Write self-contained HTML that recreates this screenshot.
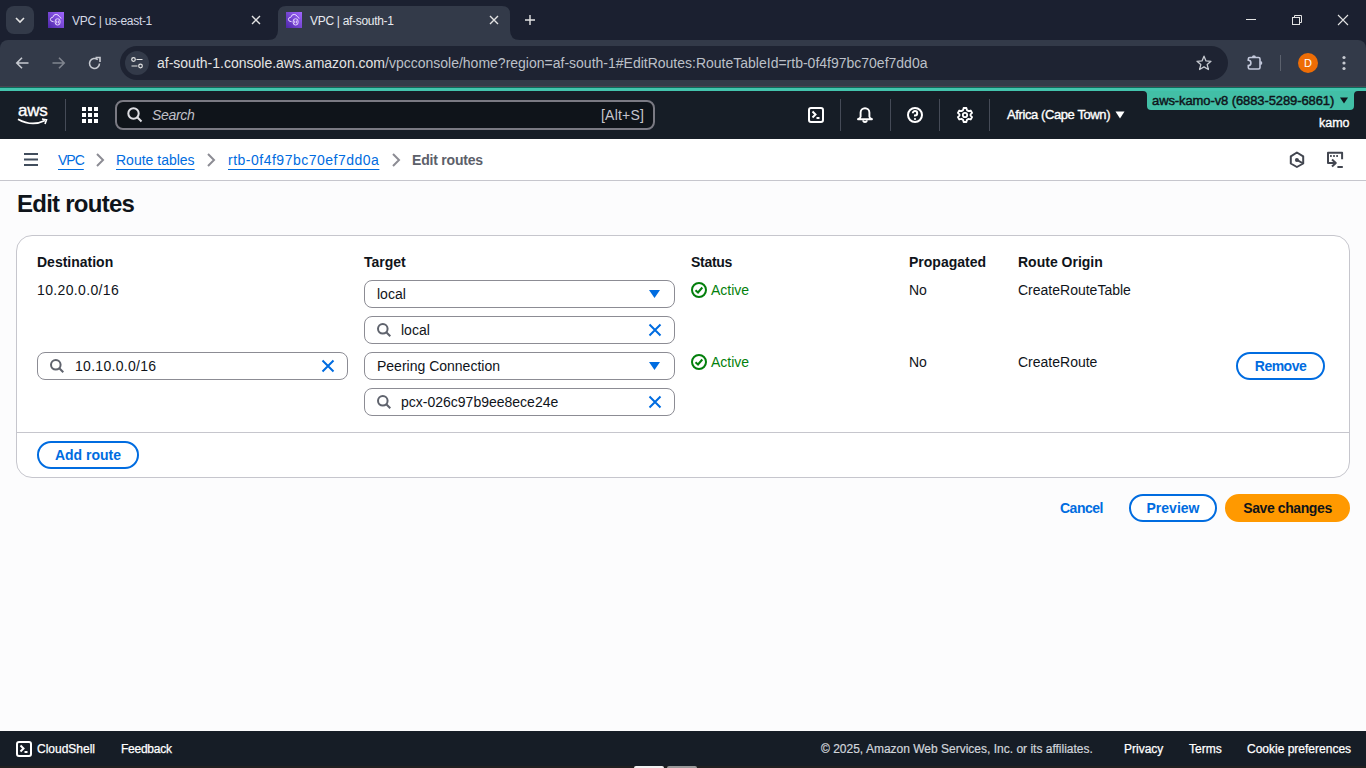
<!DOCTYPE html>
<html><head><meta charset="utf-8">
<style>
*{box-sizing:border-box;margin:0;padding:0}
html,body{width:1366px;height:768px;overflow:hidden;background:#fcfcfd;font-family:"Liberation Sans",sans-serif}
.a{position:absolute;white-space:nowrap}
svg{position:absolute;overflow:visible}
/* chrome */
#tabs{left:0;top:0;width:1366px;height:48px;background:#1b2030}
#toolbar{left:0;top:40px;width:1366px;height:47px;background:#333a49;border-radius:8px 8px 0 0}
#omni{left:120px;top:46px;width:1108px;height:34px;background:#1e2332;border-radius:17px}
/* aws header */
#teal{left:0;top:88px;width:1366px;height:3px;background:#43c4ad}
#hdr{left:0;top:91px;width:1366px;height:48px;background:#161d26}
#crumb{left:0;top:139px;width:1366px;height:42px;background:#fff;border-bottom:1px solid #c6c6cd}
.link{color:#006ce0;text-decoration:underline;text-underline-offset:4px;text-decoration-thickness:1px}
.t14{font-size:14px;line-height:20px}
.b{font-weight:700}
.card{left:16px;top:235px;width:1334px;height:243px;background:#fff;border:1px solid #c6c6cd;border-radius:16px}
.inp{position:absolute;height:28px;width:311px;border:1px solid #8c8c94;border-radius:8px;background:#fff}
.btn{position:absolute;height:28px;border:2px solid #006ce0;border-radius:20px;background:#fff;color:#006ce0;font-weight:700;font-size:14px;line-height:20px;text-align:center}
#footer{left:0;top:731px;width:1366px;height:35px;background:#161d26}
</style></head><body>

<!-- ============ CHROME TAB STRIP ============ -->
<div class="a" id="tabs"></div>
<div class="a" style="left:6px;top:6px;width:28px;height:28px;border-radius:8px;background:#333a49"></div>
<svg style="left:15px;top:17px" width="10" height="6"><path d="M1 1 L5 5 L9 1" stroke="#e3e3e3" stroke-width="1.6" fill="none"/></svg>
<!-- tab1 -->
<svg style="left:48px;top:12px" width="16" height="16"><defs><linearGradient id="fg" x1="0" y1="1" x2="1" y2="0"><stop offset="0" stop-color="#4d27a8"/><stop offset="1" stop-color="#a166ff"/></linearGradient></defs><rect width="16" height="16" fill="url(#fg)"/><path d="M5.6 9.7Q2.3 9.6 2.4 7.3Q2.7 5.2 4.8 5.3Q5.5 2.3 8.2 2.4Q10.5 2.6 11.2 4.5Q12.9 5 13.1 6.6" stroke="#e8dcff" stroke-width="1" fill="none"/><rect x="7.2" y="6.8" width="4.8" height="6.2" rx="2.2" stroke="#e8dcff" stroke-width="1" fill="#7d45d8"/><path d="M8.7 8.6V11.3M10.4 8.6V11.3" stroke="#e8dcff" stroke-width="0.9"/></svg>
<div class="a" style="left:72px;top:14px;font-size:12px;line-height:15px;color:#d5d9e6;letter-spacing:-0.3px">VPC | us-east-1</div>
<svg style="left:252px;top:16px" width="8" height="8"><path d="M0 0L8 8M8 0L0 8" stroke="#e3e3e3" stroke-width="1.4"/></svg>
<!-- active tab -->
<svg style="left:268px;top:6px" width="252" height="34"><path d="M0 34 Q10 34 10 24 L10 8 Q10 0 18 0 L234 0 Q242 0 242 8 L242 24 Q242 34 252 34 Z" fill="#333a49"/></svg>
<svg style="left:286px;top:12px" width="16" height="16"><rect width="16" height="16" fill="url(#fg)"/><path d="M5.6 9.7Q2.3 9.6 2.4 7.3Q2.7 5.2 4.8 5.3Q5.5 2.3 8.2 2.4Q10.5 2.6 11.2 4.5Q12.9 5 13.1 6.6" stroke="#e8dcff" stroke-width="1" fill="none"/><rect x="7.2" y="6.8" width="4.8" height="6.2" rx="2.2" stroke="#e8dcff" stroke-width="1" fill="#7d45d8"/><path d="M8.7 8.6V11.3M10.4 8.6V11.3" stroke="#e8dcff" stroke-width="0.9"/></svg>
<div class="a" style="left:310px;top:14px;font-size:12px;line-height:15px;color:#e8eaf0;letter-spacing:-0.3px">VPC | af-south-1</div>
<svg style="left:490px;top:16px" width="8" height="8"><path d="M0 0L8 8M8 0L0 8" stroke="#e3e3e3" stroke-width="1.4"/></svg>
<svg style="left:525px;top:15px" width="10" height="10"><path d="M5 0V10M0 5H10" stroke="#e3e3e3" stroke-width="1.4"/></svg>
<!-- window controls -->
<svg style="left:1246px;top:19px" width="10" height="1"><path d="M0 0.5H10" stroke="#e3e3e3" stroke-width="1"/></svg>
<svg style="left:1292px;top:15px" width="10" height="10"><path d="M2.5 2.5V0.5H9.5V7.5H7.5" stroke="#e3e3e3" stroke-width="1" fill="none"/><rect x="0.5" y="2.5" width="7" height="7" stroke="#e3e3e3" stroke-width="1" fill="none"/></svg>
<svg style="left:1338px;top:15px" width="10" height="10"><path d="M0 0L10 10M10 0L0 10" stroke="#e3e3e3" stroke-width="1.1"/></svg>

<!-- ============ TOOLBAR ============ -->
<div class="a" id="toolbar"></div>
<svg style="left:16px;top:57px" width="13" height="12"><path d="M6 0.8L0.8 6L6 11.2M0.8 6H12.5" stroke="#c7cad1" stroke-width="1.6" fill="none"/></svg>
<svg style="left:52px;top:57px" width="13" height="12"><path d="M7 0.8L12.2 6L7 11.2M12.2 6H0.5" stroke="#80858f" stroke-width="1.6" fill="none"/></svg>
<svg style="left:88px;top:57px" width="13" height="13"><path d="M11.5 6.5A5 5 0 1 1 9.8 2.7" stroke="#c7cad1" stroke-width="1.6" fill="none"/><path d="M7.5 0.5H12V5" stroke="#c7cad1" stroke-width="1.6" fill="none"/></svg>
<div class="a" id="omni"></div>
<div class="a" style="left:125px;top:51px;width:24px;height:24px;border-radius:12px;background:#333a49"></div>
<svg style="left:131px;top:57px" width="12" height="12"><circle cx="2.5" cy="2.5" r="1.8" stroke="#e3e3e3" stroke-width="1.2" fill="none"/><path d="M5.5 2.5H11.5M0.5 9H6.5" stroke="#e3e3e3" stroke-width="1.2"/><circle cx="9.5" cy="9" r="1.8" stroke="#e3e3e3" stroke-width="1.2" fill="none"/></svg>
<div class="a t14" style="left:157px;top:53px;color:#e3e3e3">af-south-1.console.aws.amazon.com<span style="color:#bcc0c8">/vpcconsole/home?region=af-south-1#EditRoutes:RouteTableId=rtb-0f4f97bc70ef7dd0a</span></div>
<svg style="left:1196px;top:55px" width="16" height="16"><path d="M8 1.2L10 5.9L15 6.3L11.2 9.6L12.4 14.5L8 11.9L3.6 14.5L4.8 9.6L1 6.3L6 5.9Z" stroke="#c7cad1" stroke-width="1.3" fill="none" stroke-linejoin="round"/></svg>
<svg style="left:1240px;top:50px" width="30" height="26"><path d="M9.8 7.5H18.5Q20 7.5 20 9V17.5Q20 19 18.5 19H9.8Q8.3 19 8.3 17.5V15.5A2.6 2.6 0 0 0 8.3 10.3V9Q8.3 7.5 9.8 7.5Z" stroke="#c4c9dc" stroke-width="1.6" fill="none"/><path d="M11.9 7.2A2 2 0 0 1 15.9 7.2Z" fill="#c4c9dc"/><path d="M20.3 10.9A2 2 0 0 1 20.3 14.9Z" fill="#c4c9dc"/></svg>
<div class="a" style="left:1280px;top:55px;width:1px;height:16px;background:#5b616d"></div>
<div class="a" style="left:1298px;top:53px;width:20px;height:20px;border-radius:10px;background:#ee6d05;color:#fff;font-size:11px;line-height:20px;text-align:center">D</div>
<svg style="left:1342px;top:55px" width="4" height="16"><circle cx="2" cy="2.5" r="1.6" fill="#c7cad1"/><circle cx="2" cy="8" r="1.6" fill="#c7cad1"/><circle cx="2" cy="13.5" r="1.6" fill="#c7cad1"/></svg>

<!-- ============ AWS HEADER ============ -->
<div class="a" id="teal"></div>
<div class="a" style="left:0;top:86px;width:1366px;height:1px;background:#4b4452"></div>
<div class="a" style="left:0;top:87px;width:1366px;height:1px;background:#0d6a5c"></div>
<div class="a" style="left:0;top:91px;width:1366px;height:1px;background:#14161f"></div>
<div class="a" id="hdr"></div>
<div class="a" style="left:18px;top:102px;font-size:17px;line-height:17px;color:#fff;letter-spacing:-0.2px;-webkit-text-stroke:0.35px #fff">aws</div>
<svg style="left:17px;top:118px" width="32" height="8"><path d="M1 1.2Q15 9 28 2.5" stroke="#fff" stroke-width="1.8" fill="none"/><path d="M25 1L29.5 1.8L28 6" stroke="#fff" stroke-width="1.6" fill="none"/></svg>
<div class="a" style="left:65px;top:99px;width:1px;height:32px;background:#454b57"></div>
<svg style="left:82px;top:107px" width="16" height="16"><g fill="#fff"><rect x="0" y="0" width="4" height="4"/><rect x="6" y="0" width="4" height="4"/><rect x="12" y="0" width="4" height="4"/><rect x="0" y="6" width="4" height="4"/><rect x="6" y="6" width="4" height="4"/><rect x="12" y="6" width="4" height="4"/><rect x="0" y="12" width="4" height="4"/><rect x="6" y="12" width="4" height="4"/><rect x="12" y="12" width="4" height="4"/></g></svg>
<div class="a" style="left:115px;top:100px;width:540px;height:30px;border:2px solid #7a7a83;border-radius:8px;background:#0f141a"></div>
<svg style="left:127px;top:107px" width="16" height="16"><circle cx="6.5" cy="6.5" r="5.2" stroke="#dedee3" stroke-width="2" fill="none"/><path d="M10.3 10.3L14.5 14.5" stroke="#dedee3" stroke-width="2"/></svg>
<div class="a t14" style="left:152px;top:105px;color:#c0c0c8;font-style:italic;letter-spacing:-0.3px">Search</div>
<div class="a t14" style="left:601px;top:105px;color:#c6c6cd;letter-spacing:0.2px">[Alt+S]</div>
<!-- header icons -->
<svg style="left:808px;top:107px" width="16" height="16"><rect x="1" y="1" width="14" height="14" rx="2" stroke="#fff" stroke-width="2" fill="none"/><path d="M4.5 4.5L7.5 7.5L4.5 10.5" stroke="#fff" stroke-width="2" fill="none"/><path d="M8.5 11H11.5" stroke="#fff" stroke-width="2"/></svg>
<div class="a" style="left:840px;top:99px;width:1px;height:32px;background:#454b57"></div>
<svg style="left:857px;top:107px" width="16" height="16"><path d="M3.6 9.8V5.6A4.4 4.4 0 0 1 12.4 5.6V9.8Q12.4 11 15 12.2H1Q3.6 11 3.6 9.8Z" stroke="#fff" stroke-width="1.9" fill="none" stroke-linejoin="round"/><path d="M6.2 13.2A1.8 1.8 0 0 0 9.8 13.2" stroke="#fff" stroke-width="1.8" fill="none"/></svg>
<div class="a" style="left:890px;top:99px;width:1px;height:32px;background:#454b57"></div>
<svg style="left:907px;top:107px" width="16" height="16"><circle cx="8" cy="8" r="7" stroke="#fff" stroke-width="2" fill="none"/><path d="M5.8 6.2A2.2 2.2 0 1 1 8 8.4V9.6" stroke="#fff" stroke-width="2" fill="none"/><circle cx="8" cy="12" r="1.1" fill="#fff"/></svg>
<div class="a" style="left:939px;top:99px;width:1px;height:32px;background:#454b57"></div>
<svg style="left:957px;top:107px" width="16" height="16"><path d="M6.6 1H9.4L9.9 3.1L11.6 4.1L13.7 3.5L15.1 5.9L13.5 7.4V8.6L15.1 10.1L13.7 12.5L11.6 11.9L9.9 12.9L9.4 15H6.6L6.1 12.9L4.4 11.9L2.3 12.5L0.9 10.1L2.5 8.6V7.4L0.9 5.9L2.3 3.5L4.4 4.1L6.1 3.1Z" stroke="#fff" stroke-width="1.8" fill="none" stroke-linejoin="round"/><circle cx="8" cy="8" r="2.2" stroke="#fff" stroke-width="1.8" fill="none"/></svg>
<div class="a" style="left:989px;top:99px;width:1px;height:32px;background:#454b57"></div>
<div class="a" style="left:1007px;top:105px;font-size:13px;line-height:20px;color:#fff;letter-spacing:-0.4px;-webkit-text-stroke:0.35px #fff">Africa (Cape Town)</div>
<svg style="left:1115px;top:111px" width="10" height="8"><path d="M0.5 0.5H9.5L5 7.5Z" fill="#fff"/></svg>
<!-- account badge -->
<svg style="left:1143px;top:91px" width="215" height="19"><path d="M0 0H215Q211 0 211 4V15Q211 19 207 19H8Q4 19 4 15V4Q4 0 0 0Z" fill="#42bfa6"/></svg>
<div class="a" style="left:1152px;top:91px;font-size:13px;line-height:19px;color:#0f141a;letter-spacing:-0.1px;-webkit-text-stroke:0.45px #0f141a">aws-kamo-v8 (6883-5289-6861)</div>
<svg style="left:1340px;top:97px" width="8" height="7"><path d="M0 0.5H8L4 6.5Z" fill="#0f141a"/></svg>
<div class="a" style="left:1319px;top:114px;font-size:12.5px;line-height:18px;color:#fff;-webkit-text-stroke:0.35px #fff">kamo</div>

<!-- ============ BREADCRUMB BAR ============ -->
<div class="a" id="crumb"></div>
<svg style="left:24px;top:153px" width="14" height="13"><path d="M0 1H14M0 6.5H14M0 12H14" stroke="#414d5c" stroke-width="2"/></svg>
<div class="a t14 link" style="left:58px;top:150px;letter-spacing:-1px">VPC</div>
<svg style="left:96px;top:153px" width="8" height="14"><path d="M1 1L7 7L1 13" stroke="#8c8c94" stroke-width="2" fill="none"/></svg>
<div class="a t14 link" style="left:116px;top:150px">Route tables</div>
<svg style="left:207px;top:153px" width="8" height="14"><path d="M1 1L7 7L1 13" stroke="#8c8c94" stroke-width="2" fill="none"/></svg>
<div class="a t14 link" style="left:228px;top:150px;letter-spacing:0.5px">rtb-0f4f97bc70ef7dd0a</div>
<svg style="left:392px;top:153px" width="8" height="14"><path d="M1 1L7 7L1 13" stroke="#8c8c94" stroke-width="2" fill="none"/></svg>
<div class="a t14 b" style="left:412px;top:150px;color:#5c606a;letter-spacing:-0.2px">Edit routes</div>
<svg style="left:1284px;top:148px" width="64" height="24"><g stroke="#424650" stroke-width="2" fill="none" stroke-linejoin="round"><path d="M12.9 4.5L19.2 8.4V15.5L12.9 19L6.8 15.5V8.4Z"/><path d="M12.9 11.9L19.2 15.5"/><path d="M47.5 14.9H44V4.7H58.1V11.2"/><path d="M44 14.9H51.5M48 11.5L51.8 14.9L48 18.5"/><path d="M53.4 19H58.8"/></g><circle cx="12.9" cy="11.9" r="2" fill="#424650"/><g fill="#424650"><rect x="46" y="7.1" width="1.8" height="1.8"/><rect x="49.1" y="7.1" width="1.8" height="1.8"/><rect x="52.2" y="7.1" width="1.8" height="1.8"/></g></svg>

<!-- ============ CONTENT ============ -->
<div class="a b" style="left:17px;top:189px;font-size:24px;line-height:30px;color:#0f141a;letter-spacing:-0.75px">Edit routes</div>
<div class="a card"></div>
<div class="a" style="left:17px;top:432px;width:1332px;height:1px;background:#c6c6cd"></div>

<div class="a t14 b" style="left:37px;top:252px;color:#0f141a">Destination</div>
<div class="a t14 b" style="left:364px;top:252px;color:#0f141a">Target</div>
<div class="a t14 b" style="left:691px;top:252px;color:#0f141a;letter-spacing:-0.3px">Status</div>
<div class="a t14 b" style="left:909px;top:252px;color:#0f141a">Propagated</div>
<div class="a t14 b" style="left:1018px;top:252px;color:#0f141a">Route Origin</div>

<!-- row 1 -->
<div class="a t14" style="left:37px;top:280px;color:#0f141a;letter-spacing:0.35px">10.20.0.0/16</div>
<div class="inp" style="left:364px;top:280px"></div>
<div class="a t14" style="left:377px;top:284px;color:#0f141a">local</div>
<svg style="left:649px;top:290px" width="11" height="8"><path d="M0 0H11L5.5 8Z" fill="#006ce0"/></svg>
<div class="inp" style="left:364px;top:316px"></div>
<svg style="left:377px;top:323px" width="14" height="14"><circle cx="5.8" cy="5.8" r="4.8" stroke="#5f636d" stroke-width="2" fill="none"/><path d="M9.3 9.3L13.3 13.3" stroke="#5f636d" stroke-width="2"/></svg>
<div class="a t14" style="left:401px;top:320px;color:#0f141a">local</div>
<svg style="left:649px;top:324px" width="12" height="12"><path d="M0.5 0.5L11.5 11.5M11.5 0.5L0.5 11.5" stroke="#006ce0" stroke-width="2"/></svg>
<svg style="left:691px;top:282px" width="16" height="16"><circle cx="8" cy="8" r="7" stroke="#037f0c" stroke-width="2" fill="none"/><path d="M4.5 8.3L7 10.5L11.3 5.5" stroke="#037f0c" stroke-width="2" fill="none"/></svg>
<div class="a t14" style="left:711px;top:280px;color:#037f0c">Active</div>
<div class="a t14" style="left:909px;top:280px;color:#0f141a">No</div>
<div class="a t14" style="left:1018px;top:280px;color:#0f141a">CreateRouteTable</div>

<!-- row 2 -->
<div class="inp" style="left:37px;top:352px"></div>
<svg style="left:50px;top:359px" width="14" height="14"><circle cx="5.8" cy="5.8" r="4.8" stroke="#5f636d" stroke-width="2" fill="none"/><path d="M9.3 9.3L13.3 13.3" stroke="#5f636d" stroke-width="2"/></svg>
<div class="a t14" style="left:75px;top:356px;color:#0f141a;letter-spacing:0.3px">10.10.0.0/16</div>
<svg style="left:322px;top:360px" width="12" height="12"><path d="M0.5 0.5L11.5 11.5M11.5 0.5L0.5 11.5" stroke="#006ce0" stroke-width="2"/></svg>
<div class="inp" style="left:364px;top:352px"></div>
<div class="a t14" style="left:377px;top:356px;color:#0f141a">Peering Connection</div>
<svg style="left:649px;top:362px" width="11" height="8"><path d="M0 0H11L5.5 8Z" fill="#006ce0"/></svg>
<div class="inp" style="left:364px;top:388px"></div>
<svg style="left:377px;top:395px" width="14" height="14"><circle cx="5.8" cy="5.8" r="4.8" stroke="#5f636d" stroke-width="2" fill="none"/><path d="M9.3 9.3L13.3 13.3" stroke="#5f636d" stroke-width="2"/></svg>
<div class="a t14" style="left:401px;top:392px;color:#0f141a">pcx-026c97b9ee8ece24e</div>
<svg style="left:649px;top:396px" width="12" height="12"><path d="M0.5 0.5L11.5 11.5M11.5 0.5L0.5 11.5" stroke="#006ce0" stroke-width="2"/></svg>
<svg style="left:691px;top:354px" width="16" height="16"><circle cx="8" cy="8" r="7" stroke="#037f0c" stroke-width="2" fill="none"/><path d="M4.5 8.3L7 10.5L11.3 5.5" stroke="#037f0c" stroke-width="2" fill="none"/></svg>
<div class="a t14" style="left:711px;top:352px;color:#037f0c">Active</div>
<div class="a t14" style="left:909px;top:352px;color:#0f141a">No</div>
<div class="a t14" style="left:1018px;top:352px;color:#0f141a">CreateRoute</div>
<div class="btn" style="left:1236px;top:352px;width:89px;padding-top:2px;letter-spacing:-0.5px">Remove</div>

<div class="btn" style="left:37px;top:441px;width:102px;padding-top:2px">Add route</div>

<!-- actions -->
<div class="a t14 b" style="left:1060px;top:498px;color:#006ce0;letter-spacing:-0.5px">Cancel</div>
<div class="btn" style="left:1129px;top:494px;width:88px;padding-top:2px">Preview</div>
<div class="btn" style="left:1225px;top:494px;width:125px;padding-top:2px;background:#ff9900;border-color:#ff9900;color:#0f141a;letter-spacing:-0.4px">Save changes</div>

<!-- ============ FOOTER ============ -->
<div class="a" id="footer"></div>
<svg style="left:16px;top:741px" width="16" height="16"><rect x="1" y="1" width="14" height="14" rx="2" stroke="#fff" stroke-width="2" fill="none"/><path d="M4.5 4.5L7.5 7.5L4.5 10.5" stroke="#fff" stroke-width="2" fill="none"/><path d="M8.5 11H11.5" stroke="#fff" stroke-width="2"/></svg>
<div class="a" style="left:37px;top:740px;font-size:12px;line-height:18px;color:#fff;-webkit-text-stroke:0.25px #fff">CloudShell</div>
<div class="a" style="left:121px;top:740px;font-size:12px;line-height:18px;color:#fff;letter-spacing:-0.25px;-webkit-text-stroke:0.25px #fff">Feedback</div>
<div class="a" style="left:821px;top:740px;font-size:12px;line-height:18px;color:#d1d5db;-webkit-text-stroke:0.2px #d1d5db">© 2025, Amazon Web Services, Inc. or its affiliates.</div>
<div class="a" style="left:1124px;top:740px;font-size:12px;line-height:18px;color:#fff;-webkit-text-stroke:0.25px #fff">Privacy</div>
<div class="a" style="left:1189px;top:740px;font-size:12px;line-height:18px;color:#fff;-webkit-text-stroke:0.25px #fff">Terms</div>
<div class="a" style="left:1247px;top:740px;font-size:12px;line-height:18px;color:#fff;-webkit-text-stroke:0.25px #fff">Cookie preferences</div>
<!-- taskbar edge -->
<div class="a" style="left:0;top:766px;width:1366px;height:2px;background:#202020"></div>
<div class="a" style="left:634px;top:766px;width:30px;height:2px;background:#f0f0f0;border-radius:2px 2px 0 0"></div>
<div class="a" style="left:667px;top:766px;width:30px;height:2px;background:#9a9a9a;border-radius:2px 2px 0 0"></div>
</body></html>
